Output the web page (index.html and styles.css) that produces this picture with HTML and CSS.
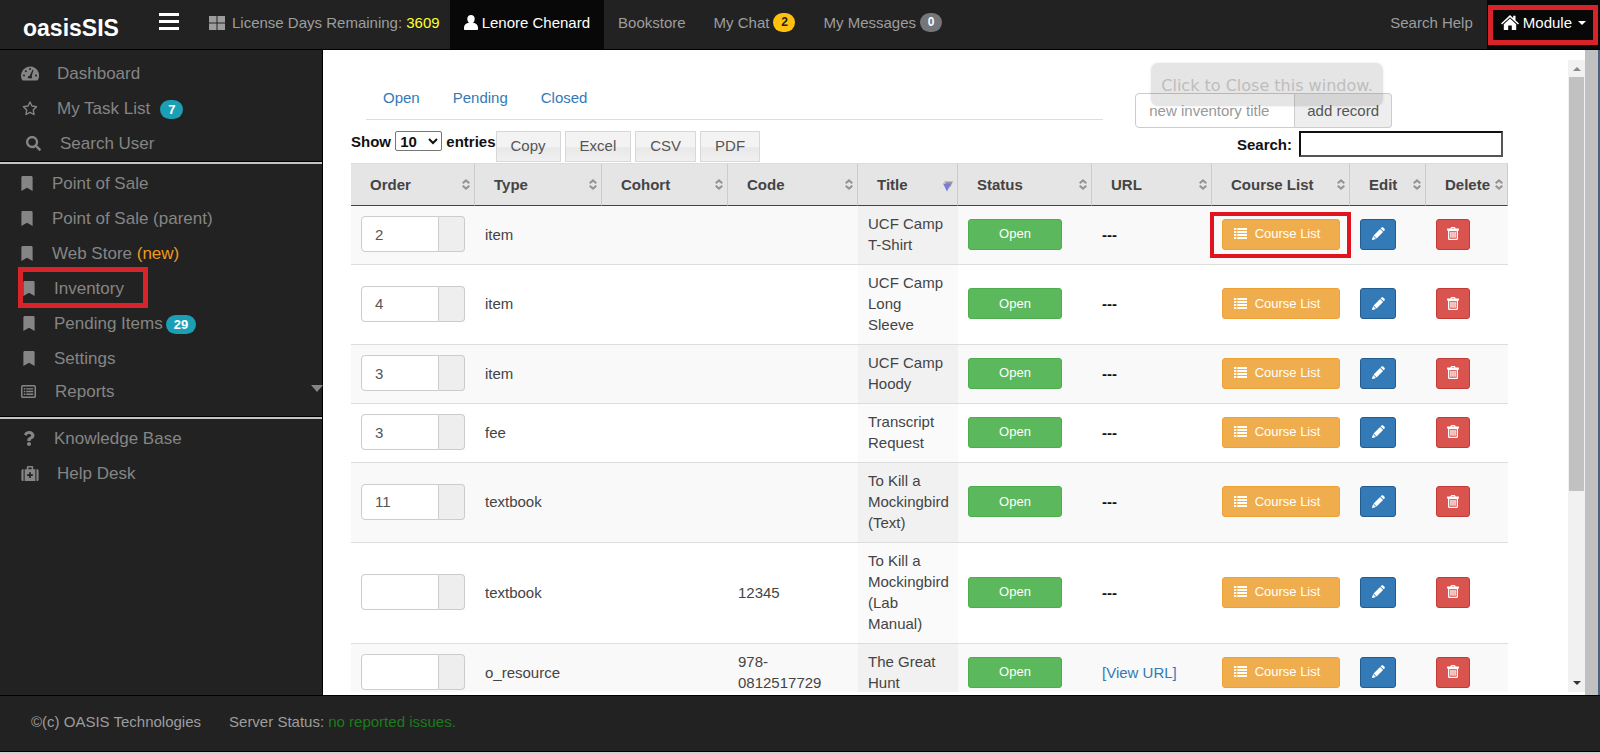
FILE: index.html
```html
<!DOCTYPE html>
<html lang="en">
<head>
<meta charset="utf-8">
<title>oasisSIS - Inventory</title>
<link rel="stylesheet" href="styles.css">
</head>
<body>
<svg class="sprite" aria-hidden="true">
  <symbol id="i-bookmark" viewBox="0 0 384 512"><path d="M0 512V48C0 21 21 0 48 0h288c27 0 48 21 48 48v464L192 400 0 512z"/></symbol>
  <symbol id="i-search" viewBox="0 0 512 512"><path d="M505 442.7L405.3 343c-4.5-4.5-10.600-7-17-7H372c27.600-35.300 44-79.700 44-128C416 93.100 322.900 0 208 0S0 93.100 0 208s93.100 208 208 208c48.300 0 92.700-16.400 128-44v16.300c0 6.400 2.500 12.500 7 17l99.700 99.700c9.400 9.400 24.600 9.400 33.900 0l28.300-28.300c9.400-9.400 9.400-24.600.1-34zM208 336c-70.700 0-128-57.200-128-128 0-70.700 57.200-128 128-128 70.700 0 128 57.200 128 128 0 70.700-57.200 128-128 128z"/></symbol>
  <symbol id="i-question" viewBox="0 0 384 512"><path d="M202 0C122 0 70.500 32.700 30 91c-7.400 10.600-5.100 25 5.200 32.900l43 32.700c10.400 7.900 25.200 6 33.300-4.100 25-31.400 43.600-49.500 82.700-49.500 30.800 0 68.800 19.800 68.800 49.600 0 22.600-18.600 34.200-49 51.200-35.400 19.900-82.300 44.600-82.300 106.400V320c0 13.300 10.700 24 24 24h72.500c13.300 0 24-10.700 24-24v-5.800c0-42.900 125.300-44.600 125.300-160.600C377.500 66.300 286.900 0 202 0zM192 373.500c-38.200 0-69.300 31-69.300 69.200S153.800 512 192 512s69.300-31 69.300-69.300-31.100-69.200-69.300-69.200z"/></symbol>
  <symbol id="i-dash" viewBox="0 0 18 14"><path fill-rule="evenodd" d="M9 0a9 9 0 0 0-9 9c0 1.700.4 3.200 1.200 4.600.2.300.4.400.7.400h14.200c.3 0 .5-.1.7-.4A9 9 0 0 0 9 0zM9 1.500a1 1 0 1 1 0 2 1 1 0 0 1 0-2zM3 8a1 1 0 1 1 0 2 1 1 0 0 1 0-2zM4.800 3.800a1 1 0 1 1 0 2 1 1 0 0 1 0-2zM15 8a1 1 0 1 1 0 2 1 1 0 0 1 0-2zM11.600 3.200l.9.300-1.900 6.300c.5.500.6 1.200.4 1.900H7c-.4-1.200.3-2.300 1.700-2.400z"/></symbol>
  <symbol id="i-star" viewBox="0 0 16 16"><path fill="none" stroke="currentColor" stroke-width="1.500" stroke-linejoin="round" d="M8 1l2.100 4.400 4.900.7-3.500 3.400.8 4.900L8 12.100l-4.300 2.300.8-4.900L1 6.100l4.900-.7z"/></symbol>
  <symbol id="i-report" viewBox="0 0 16 14"><rect x=".8" y=".8" width="14.400" height="12.400" rx="1.200" fill="none" stroke="currentColor" stroke-width="1.600"/><path d="M3 3.300h1.600v1.600H3zM5.600 3.400H13v1.400H5.600zM3 6.200h1.600v1.600H3zM5.600 6.300H13v1.400H5.600zM3 9.100h1.600v1.600H3zM5.600 9.200H13v1.400H5.600z"/></symbol>
  <symbol id="i-kit" viewBox="0 0 16 14"><path fill-rule="evenodd" d="M0 4.500C0 3.600.5 3 1.400 3H2v11h-.6C.5 14 0 13.400 0 12.500zM14 3h.6c.9 0 1.400.6 1.400 1.500v8c0 .9-.5 1.500-1.400 1.500H14zM3 14V3h2V1.200C5 .5 5.500 0 6.200 0h3.600c.7 0 1.200.5 1.200 1.200V3h2v11zM6.500 3h3V1.500h-3zM7.200 5.800v1.900H5.300v1.600h1.900v1.900h1.600V9.300h1.900V7.700H8.800V5.800z"/></symbol>
  <symbol id="i-windows" viewBox="0 0 16 14"><path d="M0 0h7.500v6.500H0zM8.500 0H16v6.500H8.500zM0 7.500h7.500V14H0zM8.500 7.500H16V14H8.500z"/></symbol>
  <symbol id="i-user" viewBox="0 0 14 15"><path d="M7 0c2.200 0 3.700 1.700 3.700 3.900 0 1.500-.7 3-1.700 3.800 2.900.3 5 2 5 4.800V14c0 .6-.4 1-1 1H1c-.6 0-1-.4-1-1v-1.500c0-2.800 2.100-4.500 5-4.800-1-.8-1.700-2.300-1.700-3.800C3.300 1.700 4.800 0 7 0z"/></symbol>
  <symbol id="i-home" viewBox="0 0 18 15"><path d="M9 0l3.200 3V.8h2.300v4.400L18 8.500l-1 1.100L9 2.200 1 9.600 0 8.500z"/><path d="M9 3.600l6.200 5.700V15h-4.400v-4.600H7.200V15H2.800V9.300z"/></symbol>
  <symbol id="i-list" viewBox="0 0 13 11"><path d="M0 0h2.300v2H0zM3.300 0H13v2H3.300zM0 3h2.300v2H0zM3.300 3H13v2H3.300zM0 6h2.300v2H0zM3.300 6H13v2H3.300zM0 9h2.300v2H0zM3.300 9H13v2H3.300z"/></symbol>
  <symbol id="i-pencil" viewBox="0 0 14 14"><path d="M10.200.6c.6-.6 1.300-.6 1.900 0l1.300 1.300c.6.6.6 1.300 0 1.900l-.9.9-3.200-3.200zM8.700 2.100l3.200 3.200-7 7-3.200-3.200zM1.200 9.700l3.100 3.100L.6 14c-.4.100-.7-.2-.6-.6z"/></symbol>
  <symbol id="i-trash" viewBox="0 0 12 13"><path fill-rule="evenodd" d="M3.500 1.500C3.500.6 4 0 5 0h2c1 0 1.500.6 1.500 1.500h3c.3 0 .5.200.5.500v1.500h-1v8c0 .9-.5 1.500-1.400 1.500H2.400C1.500 13 1 12.400 1 11.500v-8H0V2c0-.3.200-.5.500-.5zM4.800 1.500h2.400V1H4.800zM2.300 4v7.700h7.400V4zM3.300 4.800h1.300v6H3.300zM5.350 4.800h1.300v6h-1.300zM7.400 4.800h1.300v6H7.400z"/></symbol>
  <symbol id="i-sort" viewBox="0 0 8 11"><path fill="none" stroke="currentColor" stroke-width="2" d="M.7 4.300L4 1.400l3.300 2.900M.7 6.700L4 9.600l3.300-2.900"/></symbol>
  <symbol id="i-sorted" viewBox="0 0 10 10"><path fill="#999" d="M1 0h9L7 6z"/><path fill="#7b7bd8" d="M0 2h8L4 10z"/></symbol>
</svg>

<header class="topbar">
  <a class="brand" href="#">oasisSIS</a>
  <button class="burger" type="button" aria-label="Toggle menu"><span></span><span></span><span></span></button>
  <nav class="topnav">
    <a class="license" href="#"><svg class="ic-win"><use href="#i-windows"/></svg><span>License Days Remaining: <b class="days">3609</b></span></a>
    <a class="active" href="#"><svg class="ic-user"><use href="#i-user"/></svg>Lenore Chenard</a>
    <a href="#">Bookstore</a>
    <a href="#">My Chat <span class="badge yellow">2</span></a>
    <a href="#">My Messages <span class="badge gray">0</span></a>
    <a class="push" href="#">Search Help</a>
    <a class="active module" href="#"><svg class="ic-home"><use href="#i-home"/></svg>Module <i class="caret"></i></a>
  </nav>
</header>

<main class="main">
  <aside class="sidebar">
    <nav class="group first">
      <a href="#"><svg class="w18"><use href="#i-dash"/></svg>Dashboard</a>
      <a href="#"><svg class="w18"><use href="#i-star"/></svg>My Task List <span class="badge teal far">7</span></a>
      <a class="search-user" href="#"><svg class="w15"><use href="#i-search"/></svg>Search User</a>
    </nav>
    <nav class="group">
      <a class="mark" href="#"><svg class="w12"><use href="#i-bookmark"/></svg>Point of Sale</a>
      <a class="mark" href="#"><svg class="w12"><use href="#i-bookmark"/></svg>Point of Sale (parent)</a>
      <a class="mark" href="#"><svg class="w12"><use href="#i-bookmark"/></svg><span>Web Store <span class="new">(new)</span></span></a>
      <a class="mark in current" href="#"><svg class="w12"><use href="#i-bookmark"/></svg>Inventory</a>
      <a class="mark in" href="#"><svg class="w12"><use href="#i-bookmark"/></svg>Pending Items <span class="badge teal">29</span></a>
      <a class="mark in" href="#"><svg class="w12"><use href="#i-bookmark"/></svg>Settings</a>
      <a class="reports" href="#"><svg class="w15"><use href="#i-report"/></svg>Reports<i class="more"></i></a>
    </nav>
    <nav class="group last">
      <a class="kb" href="#"><svg class="w12"><use href="#i-question"/></svg>Knowledge Base</a>
      <a href="#"><svg class="w18"><use href="#i-kit"/></svg>Help Desk</a>
    </nav>
  </aside>

  <section class="frame">
    <div class="content">
      <div class="head">
        <nav class="tabs"><a href="#">Open</a><a href="#">Pending</a><a href="#">Closed</a></nav>
        <form class="adder">
          <input type="text" placeholder="new inventory title" aria-label="new inventory title"><button type="button">add record</button>
          <div class="tip">Click to Close this window.</div>
        </form>
      </div>
      <div class="tools">
        <label class="show">Show <select><option>10</option><option>25</option></select> entries</label>
        <div class="exports"><button type="button">Copy</button><button type="button">Excel</button><button type="button">CSV</button><button type="button">PDF</button></div>
        <label class="find">Search: <input type="search"></label>
      </div>
      <table class="grid">
        <colgroup><col class="c-order"><col class="c-type"><col class="c-cohort"><col class="c-code"><col class="c-title"><col class="c-status"><col class="c-url"><col class="c-course"><col class="c-edit"><col class="c-delete"></colgroup>
        <thead><tr>
          <th><div>Order<svg><use href="#i-sort"/></svg></div></th>
          <th><div>Type<svg><use href="#i-sort"/></svg></div></th>
          <th><div>Cohort<svg><use href="#i-sort"/></svg></div></th>
          <th><div>Code<svg><use href="#i-sort"/></svg></div></th>
          <th><div>Title<svg class="desc"><use href="#i-sorted"/></svg></div></th>
          <th><div>Status<svg><use href="#i-sort"/></svg></div></th>
          <th><div>URL<svg><use href="#i-sort"/></svg></div></th>
          <th><div>Course List<svg><use href="#i-sort"/></svg></div></th>
          <th><div>Edit<svg><use href="#i-sort"/></svg></div></th>
          <th><div>Delete<svg><use href="#i-sort"/></svg></div></th>
        </tr></thead>
        <tbody>
          <tr><td><div class="order"><input type="text" value="2" aria-label="Order"><span></span></div></td><td>item</td><td></td><td></td><td class="sorted">UCF Camp T-Shirt</td><td><button class="btn open" type="button">Open</button></td><td class="none">---</td><td><div class="spot"><button class="btn course" type="button"><svg><use href="#i-list"/></svg>Course List</button></div></td><td><button class="btn edit" type="button" aria-label="Edit"><svg><use href="#i-pencil"/></svg></button></td><td><button class="btn del" type="button" aria-label="Delete"><svg><use href="#i-trash"/></svg></button></td></tr>
          <tr><td><div class="order"><input type="text" value="4" aria-label="Order"><span></span></div></td><td>item</td><td></td><td></td><td class="sorted">UCF Camp Long Sleeve</td><td><button class="btn open" type="button">Open</button></td><td class="none">---</td><td><button class="btn course" type="button"><svg><use href="#i-list"/></svg>Course List</button></td><td><button class="btn edit" type="button" aria-label="Edit"><svg><use href="#i-pencil"/></svg></button></td><td><button class="btn del" type="button" aria-label="Delete"><svg><use href="#i-trash"/></svg></button></td></tr>
          <tr><td><div class="order"><input type="text" value="3" aria-label="Order"><span></span></div></td><td>item</td><td></td><td></td><td class="sorted">UCF Camp Hoody</td><td><button class="btn open" type="button">Open</button></td><td class="none">---</td><td><button class="btn course" type="button"><svg><use href="#i-list"/></svg>Course List</button></td><td><button class="btn edit" type="button" aria-label="Edit"><svg><use href="#i-pencil"/></svg></button></td><td><button class="btn del" type="button" aria-label="Delete"><svg><use href="#i-trash"/></svg></button></td></tr>
          <tr><td><div class="order"><input type="text" value="3" aria-label="Order"><span></span></div></td><td>fee</td><td></td><td></td><td class="sorted">Transcript Request</td><td><button class="btn open" type="button">Open</button></td><td class="none">---</td><td><button class="btn course" type="button"><svg><use href="#i-list"/></svg>Course List</button></td><td><button class="btn edit" type="button" aria-label="Edit"><svg><use href="#i-pencil"/></svg></button></td><td><button class="btn del" type="button" aria-label="Delete"><svg><use href="#i-trash"/></svg></button></td></tr>
          <tr><td><div class="order"><input type="text" value="11" aria-label="Order"><span></span></div></td><td>textbook</td><td></td><td></td><td class="sorted">To Kill a Mockingbird (Text)</td><td><button class="btn open" type="button">Open</button></td><td class="none">---</td><td><button class="btn course" type="button"><svg><use href="#i-list"/></svg>Course List</button></td><td><button class="btn edit" type="button" aria-label="Edit"><svg><use href="#i-pencil"/></svg></button></td><td><button class="btn del" type="button" aria-label="Delete"><svg><use href="#i-trash"/></svg></button></td></tr>
          <tr><td><div class="order"><input type="text" value="" aria-label="Order"><span></span></div></td><td>textbook</td><td></td><td>12345</td><td class="sorted">To Kill a Mockingbird (Lab Manual)</td><td><button class="btn open" type="button">Open</button></td><td class="none">---</td><td><button class="btn course" type="button"><svg><use href="#i-list"/></svg>Course List</button></td><td><button class="btn edit" type="button" aria-label="Edit"><svg><use href="#i-pencil"/></svg></button></td><td><button class="btn del" type="button" aria-label="Delete"><svg><use href="#i-trash"/></svg></button></td></tr>
          <tr><td><div class="order"><input type="text" value="" aria-label="Order"><span></span></div></td><td>o_resource</td><td></td><td>978-0812517729</td><td class="sorted">The Great Hunt</td><td><button class="btn open" type="button">Open</button></td><td><a href="#">[View URL]</a></td><td><button class="btn course" type="button"><svg><use href="#i-list"/></svg>Course List</button></td><td><button class="btn edit" type="button" aria-label="Edit"><svg><use href="#i-pencil"/></svg></button></td><td><button class="btn del" type="button" aria-label="Delete"><svg><use href="#i-trash"/></svg></button></td></tr>
        </tbody>
      </table>
    </div>
    <div class="scroll"><i class="up"></i><span class="thumb"></span><i class="down"></i></div>
  </section>
  <div class="gutter"></div>
</main>

<footer class="footer">
  <span>©(c) OASIS Technologies</span>
  <span>Server Status: <span class="ok">no reported issues.</span></span>
</footer>
</body>
</html>
```
FILE: styles.css
```css
*, *::before, *::after { box-sizing: border-box; }

body {
  margin: 0;
  height: 100vh;
  display: flex;
  flex-direction: column;
  overflow: hidden;
  background: #fff;
  border-bottom: 2px solid #c9d3d6;
  color: #444;
  font: 15px/21px "Liberation Sans", Arial, sans-serif;
}

a { color: #337ab7; text-decoration: none; }
svg { fill: currentColor; flex: none; }
button, input, select { font-family: inherit; }
.sprite { position: absolute; width: 0; height: 0; }

.badge {
  display: inline-flex;
  align-items: center;
  justify-content: center;
  height: 19px;
  min-width: 22px;
  padding: 0 7px;
  border-radius: 10px;
  font-size: 12px;
  font-weight: bold;
}
.yellow { background: #ffc010; color: #222; }
.gray { background: #74767a; color: #fff; }
.teal { background: #1b9fb5; color: #fff; }

/* top bar */
.topbar {
  display: flex;
  height: 50px;
  flex: none;
  background: #222;
  border-bottom: 1px solid #000;
}
.brand {
  width: 159px;
  padding: 12px 0 0 23px;
  color: #fff;
  font: bold 23px/32px "Liberation Sans", Arial, sans-serif;
}
.burger {
  width: 20px;
  height: 17px;
  margin: 13px 15px 0 0;
  padding: 0;
  border: 0;
  background: none;
  display: flex;
  flex-direction: column;
  justify-content: space-between;
}
.burger span { width: 100%; height: 3px; background: #fff; }
.topnav { display: flex; flex: 1; }
.topnav a {
  display: flex;
  align-items: center;
  gap: 4px;
  padding: 0 14px 4px;
  color: #9d9d9d;
  white-space: nowrap;
}
.topnav .license { padding: 0 10px 4px 15px; }
.topnav .active { background: #080808; color: #fff; }
.topnav .push { margin-left: auto; }
.days { color: #ffff2a; font-weight: normal; }
.ic-win { width: 16px; height: 14px; margin-right: 3px; }
.ic-user { width: 14px; height: 15px; }
.ic-home { width: 18px; height: 15px; }
.caret {
  margin-left: 2px;
  border: 4px solid transparent;
  border-top-color: #fff;
  border-bottom: 0;
}
.module { position: relative; }
.module::after {
  content: "";
  position: absolute;
  inset: 5px 2px 4px 1px;
  border: 5px solid #d8232a;
}

/* side bar */
.main { display: flex; flex: 1; min-height: 0; }
.sidebar {
  width: 323px;
  flex: none;
  background: #222;
  border-right: 1px solid #000;
}
.group { border-bottom: 1px solid #000; border-top: 1px solid #000; }
.group + .group::before {
  content: "";
  display: block;
  height: 2px;
  margin: -1px 0 2px;
  background: #c4c4c4;
}
.group.first { padding-top: 5px; border-top-color: #222; }
.group.last { border-bottom: 0; }
.group a {
  display: flex;
  align-items: center;
  height: 35px;
  padding-left: 21px;
  color: #858585;
  font-size: 17px;
}
.group .w18 { width: 18px; height: 15px; margin-right: 18px; }
.group .w15 { width: 15px; height: 15px; margin-right: 19px; }
.group .w12 { width: 12px; height: 15px; margin-right: 19px; }
.group .badge { margin: 2px 0 0 3px; padding: 0 8px; font-size: 13px; }
.group .far { margin-left: 10px; }
.group .search-user { padding-left: 26px; }
.group .in { padding-left: 23px; }
.group .kb { padding-left: 23px; }
.group .reports { height: 31px; margin-bottom: 9px; padding-left: 21px; }
.new { color: #f0981c; }
.more {
  margin: 0 -1px 6px auto;
  border: 6px solid transparent;
  border-top: 7px solid #858585;
  border-bottom: 0;
}
.current { position: relative; }
.current::after {
  content: "";
  position: absolute;
  left: 18px;
  top: -4px;
  width: 130px;
  height: 41px;
  border: 5px solid #d8232a;
}

/* framed page */
.frame { display: flex; flex: 1; min-width: 0; padding: 10px 0 3px; }
.content { flex: 1; min-width: 0; overflow: hidden; padding: 0 60px 0 28px; }
.head { display: flex; height: 71px; padding-right: 116px; }
.tabs {
  display: flex;
  align-items: center;
  gap: 33px;
  flex: 1;
  height: 60px;
  margin: 0 32px 0 15px;
  padding: 16px 17px 0;
  border-bottom: 1px solid #ddd;
}
.adder { position: relative; display: flex; height: 35px; margin-top: 33px; }
.adder input {
  width: 160px;
  padding: 0 13px;
  border: 1px solid #ccc;
  border-radius: 4px 0 0 4px;
  font-size: 15px;
}
.adder input::placeholder { color: #999; }
.adder button {
  padding: 0 12px;
  border: 1px solid #ccc;
  border-left: 0;
  border-radius: 0 4px 4px 0;
  background: #eee;
  color: #555;
  font-size: 15px;
}
.tip {
  position: absolute;
  left: 16px;
  top: -30px;
  padding: 12px 10px 10px;
  border-radius: 7px;
  background: rgba(0, 0, 0, .1);
  box-shadow: 0 0 3px rgba(0, 0, 0, .1);
  color: #bdbdbd;
  font-family: "DejaVu Sans", sans-serif;
  font-size: 16px;
  white-space: nowrap;
}

.tools { display: flex; height: 31px; margin-bottom: 1px; padding-right: 5px; color: #111; }
.show { font-weight: bold; white-space: nowrap; }
.show select {
  width: 47px;
  height: 20px;
  border: 1px solid #767676;
  border-radius: 2px;
  background: #fff;
  color: #111;
  font-size: 15px;
  font-weight: inherit;
}
.exports { display: flex; gap: 4px; }
.exports button {
  height: 31px;
  padding: 0 14px 2px;
  border: 1px solid #d8d8d8;
  background: linear-gradient(#f3f3f3 50%, #e8e8e8 55%, #f0f0f0);
  color: #555;
  font-size: 15px;
}
.find { display: flex; align-items: center; gap: 7px; height: 26px; margin-left: auto; font-weight: bold; }
.find input {
  width: 204px;
  height: 26px;
  border: 2px solid #555;
  border-top-color: #111;
  border-left-color: #111;
  background: #fff;
}

.grid { width: 100%; table-layout: fixed; border-collapse: separate; border-spacing: 0; }
.c-order { width: 124px; }
.c-type { width: 127px; }
.c-cohort { width: 126px; }
.c-code { width: 130px; }
.c-title { width: 100px; }
.c-status { width: 134px; }
.c-url { width: 120px; }
.c-course { width: 138px; }
.c-edit { width: 76px; }
.c-delete { width: 82px; }
th {
  height: 43px;
  padding: 0 4px 1px 19px;
  border-top: 1px solid #ddd;
  border-right: 1px solid #ccc;
  border-bottom: 1px solid #444;
  background: #e5e5e5;
  text-align: left;
  white-space: nowrap;
}
th div { display: flex; align-items: center; justify-content: space-between; }
th svg { width: 8px; height: 11px; color: #949494; }
th .desc { width: 10px; margin-top: 4px; }
.grid td { padding: 7px 10px 9px; border-bottom: 1px solid #ddd; vertical-align: middle; }
tbody tr:nth-child(odd) { background: #f9f9f9; }
.grid .sorted { background: #fafafa; }
tbody tr:nth-child(odd) .sorted { background: #f1f1f1; }
.none { color: #111; font-weight: bold; }

.order { display: flex; height: 36px; }
.order input {
  width: 78px;
  padding: 0 13px;
  border: 1px solid #ccc;
  border-radius: 4px 0 0 4px;
  background: #fff;
  color: #555;
  font-size: 15px;
}
.order span {
  width: 26px;
  border: 1px solid #ccc;
  border-left: 0;
  border-radius: 0 4px 4px 0;
  background: #eee;
}
.btn {
  display: flex;
  align-items: center;
  justify-content: center;
  height: 31px;
  padding: 0 0 1px;
  border: 1px solid;
  border-radius: 3px;
  color: #fff;
  font-size: 13px;
}
.open { width: 94px; background: #5cb85c; border-color: #4cae4c; }
.course { width: 118px; gap: 8px; padding-right: 8px; background: #f0ad4e; border-color: #eea236; }
.course svg { width: 13px; height: 11px; }
.edit { width: 36px; background: #337ab7; border-color: #235d90; }
.edit svg { width: 13px; height: 13px; }
.del { width: 34px; background: #d9534f; border-color: #c43a35; }
.del svg { width: 12px; height: 13px; }
.spot { position: relative; }
.spot::after {
  content: "";
  position: absolute;
  inset: -7px -11px -8px -12px;
  border: 4px solid #e0131f;
}

.scroll {
  display: flex;
  flex-direction: column;
  align-items: center;
  width: 17px;
  padding: 7px 0;
  background: #f1f1f1;
}
.thumb { width: 15px; height: 67%; margin: 6px 0 auto; background: #c1c1c1; }
.up, .down { border: 4px solid transparent; }
.up { border-top: 0; border-bottom-color: #888; }
.down { border-bottom: 0; border-top-color: #333; }
.gutter { width: 15px; flex: none; background: #c0c0c0; border-right: 2px solid #4d5f80; }

.footer {
  display: flex;
  align-items: center;
  gap: 28px;
  height: 57px;
  flex: none;
  padding: 0 31px 5px;
  background: #222;
  border-top: 1px solid #000;
  border-bottom: 1px solid #000;
  color: #9d9d9d;
}
.ok { color: #1e7a1e; }
```
